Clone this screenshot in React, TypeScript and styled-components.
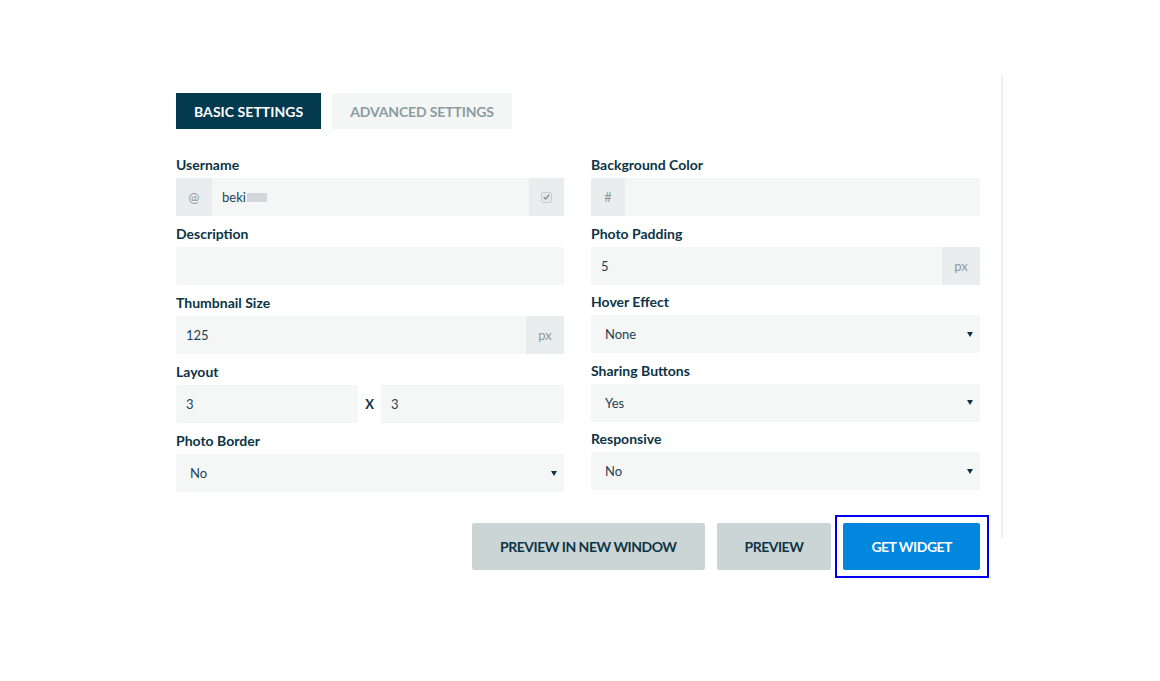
import React from 'react'
import styled, { createGlobalStyle } from 'styled-components'

const GlobalStyle = createGlobalStyle`
  html, body {
    margin: 0;
    padding: 0;
    background: #fff;
    font-family: Lato, 'Open Sans', sans-serif;
  }
`

const Page = styled.div`
  width: 1160px;
  height: 681px;
  padding: 75px 0 0 160px;
  box-sizing: border-box;
`

const Panel = styled.section`
  width: 843px;
  box-sizing: border-box;
  padding: 18px 22px 46px 16px;
  border-right: 2px solid #eef0f0;
`

const Tabs = styled.div`
  display: flex;
  gap: 11px;
  margin-bottom: 28px;
`

const Tab = styled.button<{ active?: boolean }>`
  height: 36px;
  padding: 0 18px;
  border: 0;
  border-radius: 0;
  font-family: Lato, sans-serif;
  font-weight: 700;
  font-size: 14px;
  letter-spacing: ${({ active }) => (active ? '0.05px' : '-0.15px')};
  text-transform: uppercase;
  cursor: pointer;
  background: ${({ active }) => (active ? '#043a4f' : '#f4f5f5')};
  color: ${({ active }) => (active ? '#ffffff' : '#8b9ca1')};
`

const Columns = styled.div`
  display: grid;
  grid-template-columns: 388px 389px;
  column-gap: 27px;
  align-items: start;
`

const Column = styled.div<{ gap: number }>`
  display: flex;
  flex-direction: column;
  gap: ${({ gap }) => gap}px;
`

const Field = styled.div`
  display: flex;
  flex-direction: column;
  gap: 5px;
`

const Label = styled.label`
  font-size: 14px;
  line-height: 16px;
  font-weight: 700;
  color: #0c3446;
`

const InputGroup = styled.div`
  display: flex;
  height: 38px;
  background: #f5f6f6;
  border-radius: 1px;
`

const Addon = styled.span<{ width?: number }>`
  flex: 0 0 ${({ width }) => width || 36}px;
  display: flex;
  align-items: center;
  justify-content: center;
  background: #e9eded;
  color: #8d9a9f;
  font-size: 13px;
`

const Value = styled.span`
  flex: 1;
  display: flex;
  align-items: center;
  padding: 0 10px;
  font-size: 13px;
  color: #1d4354;
`

const Redacted = styled.span`
  display: inline-block;
  width: 20px;
  height: 9px;
  margin-left: 1px;
  background: #d3d7db;
`

const Check = styled.span`
  width: 9px;
  height: 9px;
  border: 1px solid #c9cecf;
  border-radius: 2px;
  background: #e4e7e7;
  display: flex;
  align-items: center;
  justify-content: center;
`

const Select = styled.div`
  display: flex;
  align-items: center;
  justify-content: space-between;
  height: 38px;
  padding: 0 7px 0 14px;
  background: #f5f6f6;
  border-radius: 1px;
  font-size: 13px;
  color: #1d4354;
`

const Caret = styled.span`
  width: 0;
  height: 0;
  border-left: 3px solid transparent;
  border-right: 3px solid transparent;
  border-top: 5px solid #0c3446;
`

const LayoutRow = styled.div`
  display: flex;
  align-items: center;
`

const Times = styled.span`
  width: 23px;
  text-align: center;
  font-size: 13px;
  font-weight: 700;
  color: #0c3446;
`

const Footer = styled.div`
  display: flex;
  justify-content: flex-end;
  align-items: center;
  gap: 12px;
  width: 820px;
  margin-top: -15px;
`

const Button = styled.button<{ primary?: boolean }>`
  position: relative;
  height: 47px;
  padding: 0 28px;
  border: 0;
  border-radius: 2px;
  font-family: Lato, sans-serif;
  font-weight: 700;
  font-size: 14px;
  letter-spacing: -0.5px;
  text-transform: uppercase;
  cursor: pointer;
  background: ${({ primary }) => (primary ? '#0187de' : '#ccd5d6')};
  color: ${({ primary }) => (primary ? '#ffffff' : '#0e3545')};

  &[data-focused]::after {
    content: '';
    position: absolute;
    inset: -8px -9px -8px -8px;
    border: 2px solid #0000ee;
  }
`

const CheckIcon = () => (
  <svg width="7" height="6" viewBox="0 0 7 6">
    <path d="M0.8 3.2 L2.7 5 L6.2 0.8" stroke="#8a9294" strokeWidth="1.4" fill="none" />
  </svg>
)

const SelectField = ({ label, value }: { label: string; value: string }) => (
  <Field>
    <Label>{label}</Label>
    <Select>
      {value}
      <Caret />
    </Select>
  </Field>
)

export default function App() {
  return (
    <>
      <GlobalStyle />
      <Page>
        <Panel>
          <Tabs>
            <Tab active>Basic Settings</Tab>
            <Tab>Advanced Settings</Tab>
          </Tabs>
          <Columns>
            <Column gap={10}>
              <Field>
                <Label>Username</Label>
                <InputGroup>
                  <Addon>@</Addon>
                  <Value>
                    beki<Redacted />
                  </Value>
                  <Addon width={35}>
                    <Check>
                      <CheckIcon />
                    </Check>
                  </Addon>
                </InputGroup>
              </Field>
              <Field>
                <Label>Description</Label>
                <InputGroup />
              </Field>
              <Field>
                <Label>Thumbnail Size</Label>
                <InputGroup>
                  <Value>125</Value>
                  <Addon width={38}>px</Addon>
                </InputGroup>
              </Field>
              <Field>
                <Label>Layout</Label>
                <LayoutRow>
                  <InputGroup style={{ width: 182 }}>
                    <Value>3</Value>
                  </InputGroup>
                  <Times>X</Times>
                  <InputGroup style={{ flex: 1 }}>
                    <Value>3</Value>
                  </InputGroup>
                </LayoutRow>
              </Field>
              <SelectField label="Photo Border" value="No" />
            </Column>
            <Column gap={9.5}>
              <Field>
                <Label>Background Color</Label>
                <InputGroup>
                  <Addon width={34}>#</Addon>
                  <Value />
                </InputGroup>
              </Field>
              <Field>
                <Label>Photo Padding</Label>
                <InputGroup>
                  <Value>5</Value>
                  <Addon width={38}>px</Addon>
                </InputGroup>
              </Field>
              <SelectField label="Hover Effect" value="None" />
              <SelectField label="Sharing Buttons" value="Yes" />
              <SelectField label="Responsive" value="No" />
            </Column>
          </Columns>
        </Panel>
        <Footer>
          <Button>Preview in new window</Button>
          <Button>Preview</Button>
          <Button primary data-focused>
            Get widget
          </Button>
        </Footer>
      </Page>
    </>
  )
}
